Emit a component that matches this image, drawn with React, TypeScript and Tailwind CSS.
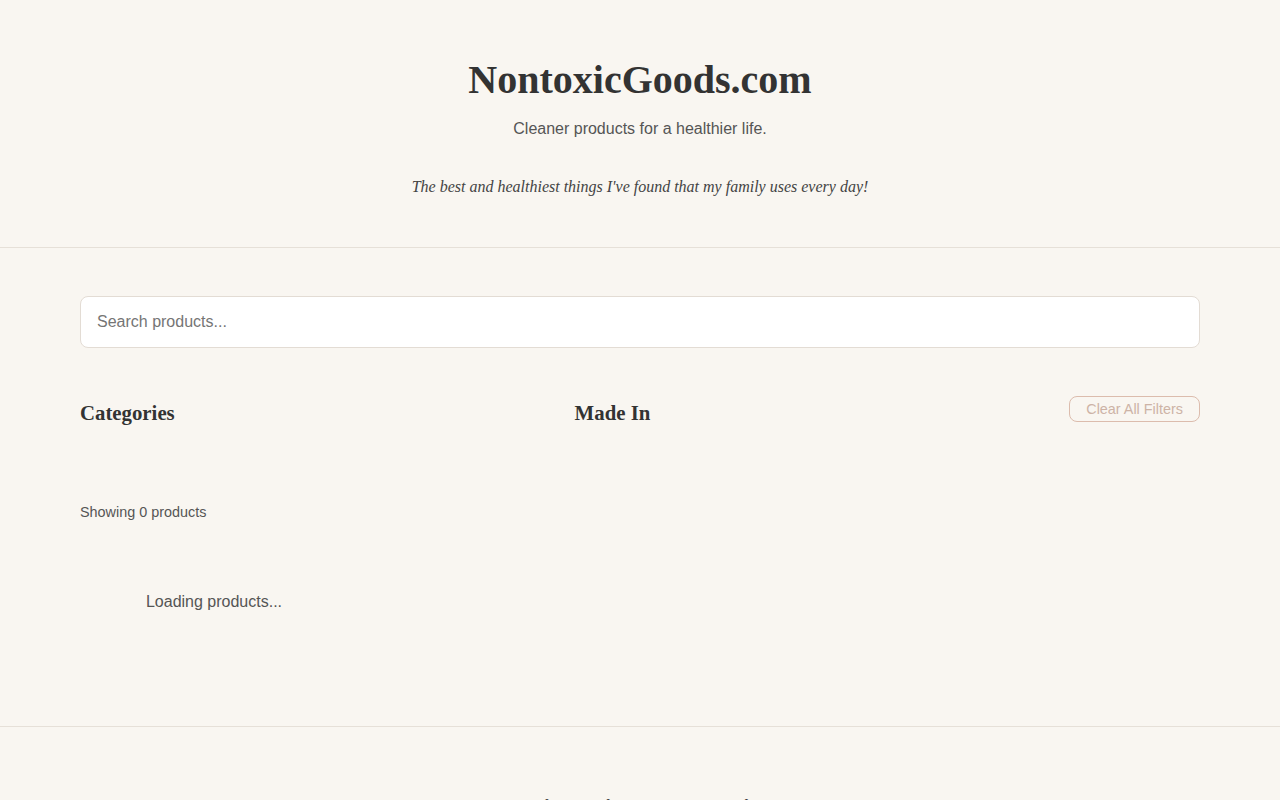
export default function App() {
  return (
    <div className="min-h-screen bg-[#f9f6f1] text-[#333] font-['Liberation_Sans',Arial,sans-serif]">
      {/* Header */}
      <header className="border-b border-[#e6e0d8] px-8 pt-14 pb-12 text-center">
        <h1 className="font-['Liberation_Serif','Times_New_Roman',serif] text-[40px] leading-[48px] font-bold text-[#333]">
          NontoxicGoods.com
        </h1>
        <p className="mt-[13px] text-base leading-6 text-[#555]">Cleaner products for a healthier life.</p>
        <p className="mt-[34px] font-['Liberation_Serif','Times_New_Roman',serif] text-base leading-6 italic text-[#444]">
          The best and healthiest things I've found that my family uses every day!
        </p>
      </header>

      {/* Main */}
      <main className="mx-auto max-w-[1120px] pt-12 pb-16">
        <input
          type="text"
          placeholder="Search products..."
          className="block h-[52px] w-full rounded-lg border border-[#e3dcd4] bg-white px-4 text-base text-[#333] placeholder:text-[#757575] outline-none"
        />

        <div className="mt-12 grid grid-cols-[1fr_1fr_auto] items-start gap-8">
          <div>
            <h3 className="font-['Liberation_Serif','Times_New_Roman',serif] text-[20.8px] leading-[34px] font-bold text-[#333]">
              Categories
            </h3>
          </div>
          <div>
            <h3 className="font-['Liberation_Serif','Times_New_Roman',serif] text-[20.8px] leading-[34px] font-bold text-[#333]">
              Made In
            </h3>
          </div>
          <button
            disabled
            className="h-[26px] rounded-lg border border-[#dcbcad] px-4 text-[14.4px] leading-none text-[#cdb3a6]"
          >
            Clear All Filters
          </button>
        </div>

        <p className="mt-[72px] text-[14.4px] leading-5 text-[#555]">Showing 0 products</p>

        <div className="mt-5 grid grid-cols-4 gap-4">
          <div className="py-12 text-center text-base leading-6 text-[#555]">Loading products...</div>
        </div>
      </main>

      {/* Footer */}
      <footer className="border-t border-[#e6e0d8] px-8 pt-[64px] pb-12 text-center">
        <h2 className="font-['Liberation_Serif','Times_New_Roman',serif] text-2xl leading-8 font-bold text-[#333]">
          Questions, tips or suggestions?
        </h2>
        <p className="mt-3 text-sm text-[#555]">© NontoxicGoods.com</p>
      </footer>
    </div>
  );
}
